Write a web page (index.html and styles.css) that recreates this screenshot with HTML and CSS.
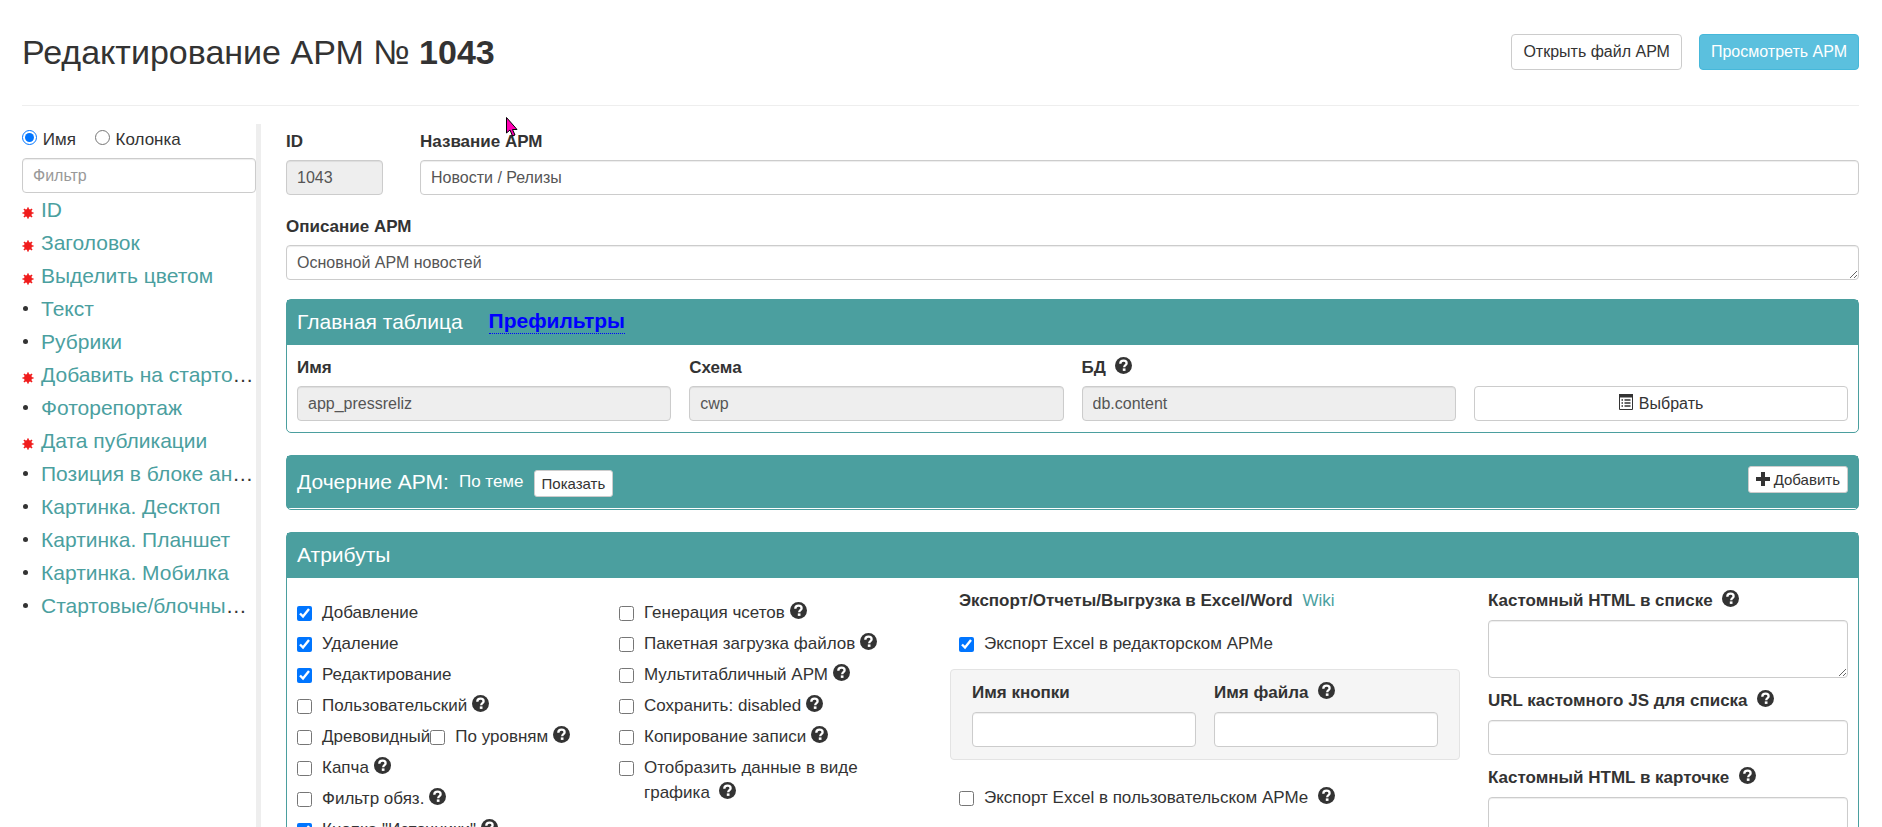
FILE: index.html
```html
<!DOCTYPE html>
<html lang="ru">
<head>
    <meta charset="UTF-8">
    <meta name="viewport" content="width=device-width, initial-scale=1.0">
    <title>Редактирование АРМ № 1043</title>
    <link rel="stylesheet" href="styles.css">
</head>
<body>
    <svg class="sprite" aria-hidden="true">
        <symbol id="help" viewBox="0 0 17 17">
            <circle cx="8.500" cy="8.500" r="8.500" fill="#333"/>
            <path d="M5.300 6.700C5.300 4.500 6.700 3.700 8.600 3.700C10.500 3.700 11.600 4.700 11.600 6.200C11.600 8.200 9.200 8 9.200 10.200" fill="none" stroke="#fff" stroke-width="2.300"/>
            <path d="M7.800 11.400h2.700v2.500h-2.700z" fill="#fff"/>
        </symbol>
        <symbol id="star" viewBox="0 0 12 12">
            <path d="M6 .5v11M.5 6h11M2 2l8 8M10 2l-8 8" stroke="#f01c1c" stroke-width="1.700"/>
            <circle cx="6" cy="6" r="3.900" fill="#f01c1c"/>
        </symbol>
    </svg>

    <div class="page">
        <header class="header">
            <h1>Редактирование АРМ № <b>1043</b></h1>
            <div class="header-buttons">
                <button type="button" class="btn">Открыть файл АРМ</button>
                <button type="button" class="btn btn-info">Просмотреть АРМ</button>
            </div>
        </header>

        <div class="layout">
            <aside class="sidebar">
                <div class="radios">
                    <label><input type="radio" name="mode" checked> Имя</label>
                    <label><input type="radio" name="mode"> Колонка</label>
                </div>
                <input type="text" class="control" placeholder="Фильтр" aria-label="Фильтр">
                <ul class="fields">
                    <li><svg class="star"><use href="#star"/></svg><a href="#">ID</a></li>
                    <li><svg class="star"><use href="#star"/></svg><a href="#">Заголовок</a></li>
                    <li><svg class="star"><use href="#star"/></svg><a href="#">Выделить цветом</a></li>
                    <li><i class="dot"></i><a href="#">Текст</a></li>
                    <li><i class="dot"></i><a href="#">Рубрики</a></li>
                    <li><svg class="star"><use href="#star"/></svg><a href="#">Добавить на стартовую</a></li>
                    <li><i class="dot"></i><a href="#">Фоторепортаж</a></li>
                    <li><svg class="star"><use href="#star"/></svg><a href="#">Дата публикации</a></li>
                    <li><i class="dot"></i><a href="#">Позиция в блоке анонсов</a></li>
                    <li><i class="dot"></i><a href="#">Картинка. Десктоп</a></li>
                    <li><i class="dot"></i><a href="#">Картинка. Планшет</a></li>
                    <li><i class="dot"></i><a href="#">Картинка. Мобилка</a></li>
                    <li><i class="dot"></i><a href="#">Стартовые/блочные новости</a></li>
                </ul>
            </aside>

            <main class="main">
                <div class="row-name">
                    <div class="field">
                        <label for="arm-id">ID</label>
                        <input type="text" id="arm-id" class="control" value="1043" readonly>
                    </div>
                    <div class="field">
                        <label for="arm-name">Название АРМ</label>
                        <input type="text" id="arm-name" class="control" value="Новости / Релизы">
                    </div>
                </div>
                <div class="field field-about">
                    <label for="arm-about">Описание АРМ</label>
                    <textarea id="arm-about" class="control" rows="1">Основной АРМ новостей</textarea>
                </div>

                <section class="panel">
                    <div class="panel-heading">
                        <h2>Главная таблица</h2>
                        <a href="#" class="prefilters">Префильтры</a>
                    </div>
                    <div class="panel-body row-table">
                        <div class="field">
                            <label for="t-name">Имя</label>
                            <input type="text" id="t-name" class="control" value="app_pressreliz" readonly>
                        </div>
                        <div class="field">
                            <label for="t-schema">Схема</label>
                            <input type="text" id="t-schema" class="control" value="cwp" readonly>
                        </div>
                        <div class="field">
                            <label for="t-db">БД&nbsp; <svg class="help"><use href="#help"/></svg></label>
                            <input type="text" id="t-db" class="control" value="db.content" readonly>
                        </div>
                        <button type="button" class="btn btn-select">
                            <svg class="icon-list" viewBox="0 0 16 16">
                                <path d="M1.500 .5h13v15h-13z" fill="none" stroke="#333"/>
                                <path d="M1 0h14v3.500H1z" fill="#333"/>
                                <path d="M3.500 6h1.500M3.500 9h1.500M3.500 12h1.500M6.500 6h6M6.500 9h6M6.500 12h6" stroke="#333" stroke-width="1.300"/>
                            </svg>
                            Выбрать
                        </button>
                    </div>
                </section>

                <section class="panel panel-children">
                    <div class="panel-heading">
                        <h2>Дочерние АРМ:</h2>
                        <span class="child-name">По теме</span>
                        <button type="button" class="btn btn-sm btn-show">Показать</button>
                        <button type="button" class="btn btn-sm btn-add">
                            <svg class="icon-plus" viewBox="0 0 14 14"><path d="M7 0v14M0 7h14" stroke="#333" stroke-width="4"/></svg>
                            Добавить
                        </button>
                    </div>
                </section>

                <section class="panel">
                    <div class="panel-heading">
                        <h2>Атрибуты</h2>
                    </div>
                    <div class="panel-body attrs">
                        <div class="checks">
                            <label class="check"><input type="checkbox" checked><span>Добавление</span></label>
                            <label class="check"><input type="checkbox" checked><span>Удаление</span></label>
                            <label class="check"><input type="checkbox" checked><span>Редактирование</span></label>
                            <label class="check"><input type="checkbox"><span>Пользовательский <svg class="help"><use href="#help"/></svg></span></label>
                            <div class="check-pair">
                                <label class="check"><input type="checkbox"><span>Древовидный</span></label>
                                <label class="check"><input type="checkbox"><span>По уровням <svg class="help"><use href="#help"/></svg></span></label>
                            </div>
                            <label class="check"><input type="checkbox"><span>Капча <svg class="help"><use href="#help"/></svg></span></label>
                            <label class="check"><input type="checkbox"><span>Фильтр обяз. <svg class="help"><use href="#help"/></svg></span></label>
                            <label class="check"><input type="checkbox" checked><span>Кнопка "Источники" <svg class="help"><use href="#help"/></svg></span></label>
                        </div>
                        <div class="checks">
                            <label class="check"><input type="checkbox"><span>Генерация чсетов <svg class="help"><use href="#help"/></svg></span></label>
                            <label class="check"><input type="checkbox"><span>Пакетная загрузка файлов <svg class="help"><use href="#help"/></svg></span></label>
                            <label class="check"><input type="checkbox"><span>Мультитабличный АРМ <svg class="help"><use href="#help"/></svg></span></label>
                            <label class="check"><input type="checkbox"><span>Сохранить: disabled <svg class="help"><use href="#help"/></svg></span></label>
                            <label class="check"><input type="checkbox"><span>Копирование записи <svg class="help"><use href="#help"/></svg></span></label>
                            <label class="check"><input type="checkbox"><span>Отобразить данные в виде графика&nbsp; <svg class="help"><use href="#help"/></svg></span></label>
                        </div>
                        <div class="export">
                            <p class="export-title"><b>Экспорт/Отчеты/Выгрузка в Excel/Word</b> <a href="#">Wiki</a></p>
                            <label class="check"><input type="checkbox" checked><span>Экспорт Excel в редакторском АРМе</span></label>
                            <div class="well">
                                <div class="field">
                                    <label for="btn-name">Имя кнопки</label>
                                    <input type="text" id="btn-name" class="control">
                                </div>
                                <div class="field">
                                    <label for="file-name">Имя файла&nbsp; <svg class="help"><use href="#help"/></svg></label>
                                    <input type="text" id="file-name" class="control">
                                </div>
                            </div>
                            <label class="check"><input type="checkbox"><span>Экспорт Excel в пользовательском АРМе&nbsp; <svg class="help"><use href="#help"/></svg></span></label>
                        </div>
                        <div class="custom">
                            <div class="field">
                                <label for="html-list">Кастомный HTML в списке&nbsp; <svg class="help"><use href="#help"/></svg></label>
                                <textarea id="html-list" class="control tall"></textarea>
                            </div>
                            <div class="field">
                                <label for="js-list">URL кастомного JS для списка&nbsp; <svg class="help"><use href="#help"/></svg></label>
                                <input type="text" id="js-list" class="control">
                            </div>
                            <div class="field">
                                <label for="html-card">Кастомный HTML в карточке&nbsp; <svg class="help"><use href="#help"/></svg></label>
                                <textarea id="html-card" class="control tall"></textarea>
                            </div>
                        </div>
                    </div>
                </section>
            </main>
        </div>
    </div>

    <svg class="cursor" viewBox="0 0 12 20" aria-hidden="true">
        <path d="M.5 .5v15.500l3.500-3 2.500 6 2.500-1-2.500-5.500h4.500z" fill="#ff00b4" stroke="#000"/>
    </svg>
</body>
</html>
```
FILE: styles.css
```css
* {
    box-sizing: border-box;
}
html, body {
    margin: 0;
    height: 100%;
    overflow: hidden;
}
body {
    font-family: "Liberation Sans", Arial, sans-serif;
    font-size: 17px;
    line-height: 25px;
    color: #333;
    background: #fff;
}
a {
    color: #4b9f9f;
    text-decoration: none;
}
.sprite {
    position: absolute;
    width: 0;
    height: 0;
}
.page {
    padding: 0 23px 0 22px;
}
.header {
    display: flex;
    justify-content: space-between;
    align-items: center;
    height: 106px;
    padding-bottom: 1px;
    border-bottom: 1px solid #eee;
}
h1 {
    margin: 0;
    font-size: 34px;
    font-weight: 400;
}
.header-buttons {
    display: flex;
    gap: 17px;
}
.btn {
    height: 36px;
    padding: 0 11px;
    border: 1px solid #ccc;
    border-radius: 4px;
    background: #fff;
    color: #333;
    font-family: inherit;
    font-size: 16px;
}
.btn-info {
    background: #5bc0de;
    border-color: #46b8da;
    color: #fff;
}
.btn-sm {
    height: 27px;
    padding: 0 7px;
    border-radius: 3px;
    font-size: 15px;
}
.layout {
    display: flex;
    gap: 25px;
    margin-top: 18px;
}

/* список полей слева */
.sidebar {
    flex: 0 0 239px;
    min-width: 0;
    min-height: 720px;
    border-right: 5px solid #eee;
}
.radios {
    display: flex;
    gap: 19px;
    padding: 3px 0 6px;
}
.radios input {
    width: 15px;
    height: 15px;
    margin: 0 1px 0 0;
    vertical-align: 0;
    accent-color: #0075ff;
}
.fields {
    margin: 0;
    padding: 0;
    list-style: none;
    font-size: 21px;
    line-height: 33px;
}
.fields li {
    overflow: hidden;
    white-space: nowrap;
    text-overflow: ellipsis;
}
.star {
    width: 12px;
    height: 12px;
    margin-right: 7px;
    vertical-align: -2px;
}
.dot {
    display: inline-block;
    width: 5px;
    height: 5px;
    margin: 0 13px 0 1px;
    border-radius: 50%;
    background: #333;
    vertical-align: 5px;
}

.control {
    display: block;
    width: 100%;
    height: 35px;
    padding: 4px 10px;
    border: 1px solid #ccc;
    border-radius: 4px;
    background: #fff;
    box-shadow: inset 0 1px 1px rgba(0, 0, 0, 0.075);
    color: #555;
    font-family: inherit;
    font-size: 16px;
    line-height: 25px;
}
.control::placeholder {
    color: #999;
}
.control[readonly] {
    background: #eee;
}
.tall {
    height: 58px;
}
.field label {
    display: block;
    margin-bottom: 6px;
    font-weight: 700;
}
.help {
    width: 17px;
    height: 17px;
    vertical-align: -1px;
}

.main {
    flex: 1;
    min-width: 0;
    padding-top: 5px;
}
.row-name {
    display: grid;
    grid-template-columns: 97px 1fr;
    gap: 37px;
    margin-bottom: 19px;
}
.field-about {
    margin-bottom: 19px;
}

.panel {
    margin-bottom: 22px;
    border: 1px solid #4b9f9f;
    border-radius: 5px;
}
.panel-heading {
    display: flex;
    align-items: center;
    height: 45px;
    padding: 0 10px 3px;
    background: #4b9f9f;
    color: #fff;
}
h2 {
    margin: 0;
    font-size: 21px;
    font-weight: 400;
}
.prefilters {
    margin-left: 26px;
    border-bottom: 1px dotted #00f;
    color: #00f;
    font-size: 21px;
    font-weight: 700;
}
.panel-body {
    padding: 10px 10px 11px;
}
.row-table {
    display: grid;
    grid-template-columns: repeat(4, 1fr);
    gap: 18px;
    align-items: end;
}
.btn-select {
    height: 35px;
}
.icon-list {
    width: 16px;
    height: 16px;
    vertical-align: -1px;
}
.panel-children .panel-heading {
    height: 52px;
    margin-bottom: 1px;
    padding-bottom: 2px;
    gap: 10px;
}
.btn-show {
    margin-top: 4px;
}
.btn-add {
    margin: 0 0 4px auto;
}
.icon-plus {
    width: 14px;
    height: 14px;
    vertical-align: -1px;
}

/* атрибуты */
.attrs {
    display: grid;
    grid-template-columns: 304fr 322fr 511fr 360fr;
    gap: 18px;
}
.attrs .field label {
    margin-bottom: 7px;
}
.checks {
    display: flex;
    flex-direction: column;
    gap: 6px;
    padding: 12px 20px 0 0;
}
.check {
    display: flex;
    gap: 10px;
}
.check input {
    flex: none;
    width: 15px;
    height: 15px;
    margin: 6px 0 0;
    accent-color: #0075ff;
}
.check-pair {
    display: flex;
}
.export-title {
    margin: 0 0 18px;
}
.export-title a {
    margin-left: 5px;
}
.well {
    display: grid;
    grid-template-columns: 1fr 1fr;
    gap: 18px;
    margin: 13px 10px 25px -9px;
    padding: 10px 21px 12px;
    border: 1px solid #e3e3e3;
    border-radius: 4px;
    background: #f5f5f5;
}
.custom {
    display: flex;
    flex-direction: column;
    gap: 10px;
}

.cursor {
    position: absolute;
    left: 506px;
    top: 117px;
    width: 12px;
    height: 20px;
}
```
